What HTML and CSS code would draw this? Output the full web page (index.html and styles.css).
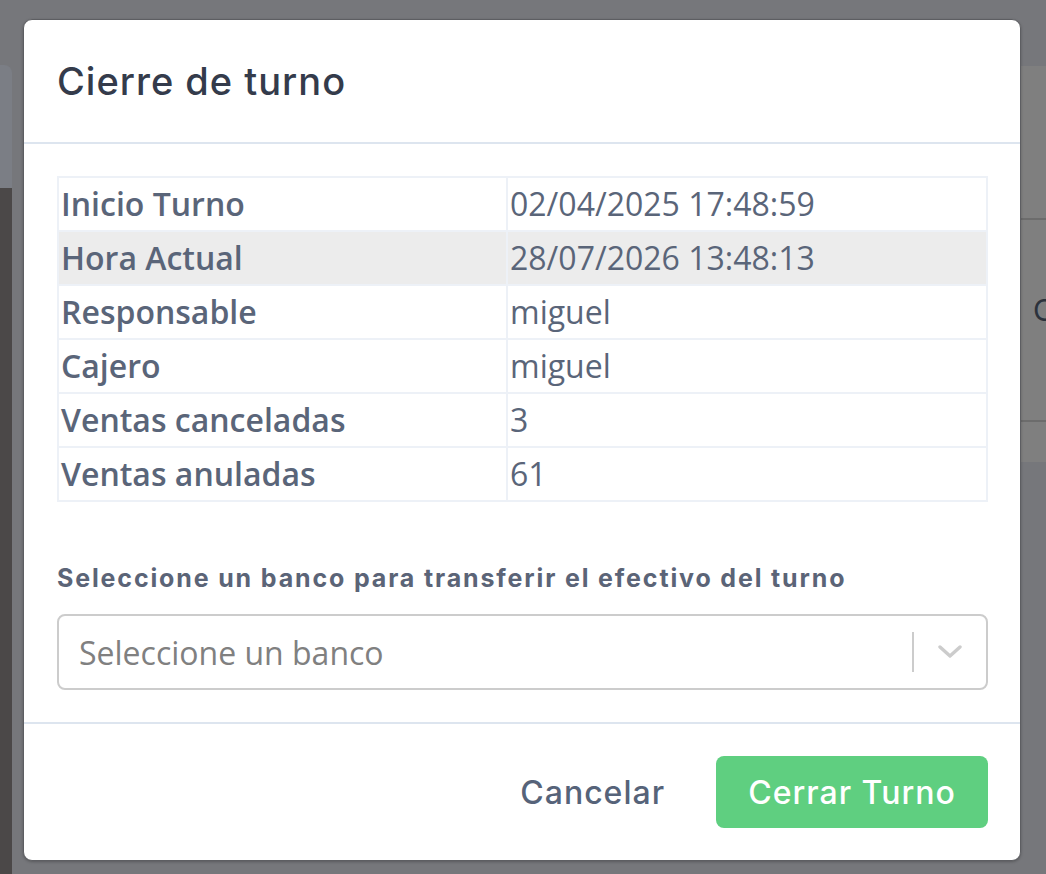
FILE: index.html
```html
<!DOCTYPE html>
<html lang="es">
<head>
<meta charset="utf-8">
<title>Cierre de turno</title>
<link rel="stylesheet" href="styles.css">
</head>
<body>
<div class="page">
  <aside class="sidebar">
    <div class="sidebar-top"></div>
    <div class="sidebar-body"></div>
  </aside>
  <main class="main">
    <section class="bg-card">
      <div class="bg-card-head"></div>
      <div class="bg-row"><span>C</span></div>
    </section>
  </main>
</div>

<div class="overlay">
  <div class="modal">
    <header class="modal-header">
      <h2 class="modal-title">Cierre de turno</h2>
    </header>
    <div class="modal-body">
      <table class="info-table">
        <tbody>
          <tr><th>Inicio Turno</th><td>02/04/2025 17:48:59</td></tr>
          <tr class="hl"><th>Hora Actual</th><td>28/07/2026 13:48:13</td></tr>
          <tr><th>Responsable</th><td>miguel</td></tr>
          <tr><th>Cajero</th><td>miguel</td></tr>
          <tr><th>Ventas canceladas</th><td>3</td></tr>
          <tr><th>Ventas anuladas</th><td>61</td></tr>
        </tbody>
      </table>
      <label class="field-label">Seleccione un banco para transferir el efectivo del turno</label>
      <div class="select">
        <span class="placeholder">Seleccione un banco</span>
        <span class="select-sep"></span>
        <span class="select-arrow">
          <svg width="24" height="14" viewBox="0 0 24 14"><path d="M2 2 L12 11 L22 2" fill="none" stroke="#cccccc" stroke-width="3.4" stroke-linecap="round" stroke-linejoin="round"/></svg>
        </span>
      </div>
    </div>
    <footer class="modal-footer">
      <button class="btn btn-link">Cancelar</button>
      <button class="btn btn-success">Cerrar Turno</button>
    </footer>
  </div>
</div>
</body>
</html>
```

FILE: styles.css
```css
* { box-sizing: border-box; }
html, body { margin: 0; padding: 0; }
body {
  width: 1046px;
  height: 874px;
  overflow: hidden;
  background: #76777b;
  position: relative;
  font-family: "Open Sans", "Noto Sans", sans-serif;
}

/* background page (already dimmed) */
.page {
  display: flex;
  height: 874px;
}
.sidebar {
  width: 12px;
  margin-top: 65px;
  display: flex;
  flex-direction: column;
}
.sidebar-top {
  height: 123px;
  background: #7b7e85;
  border-top-right-radius: 8px;
}
.sidebar-body {
  flex: 1;
  background: #4b4848;
}
.main {
  flex: 1;
  padding-top: 66px;
  padding-left: 700px;
}
.bg-card {
  height: 396px;
  background: #7f7f7f;
}
.bg-card-head {
  height: 152px;
}
.bg-row {
  height: 204px;
  border-top: 2px solid #6c6c6c;
  border-bottom: 2px solid #6c6c6c;
  display: flex;
  align-items: center;
  justify-content: flex-end;
  padding-bottom: 20px;
  overflow: hidden;
}
.bg-row span {
  font-family: "Inter", sans-serif;
  font-size: 30px;
  color: #2c323c;
  margin-right: -9px;
}

/* modal */
.overlay {
  position: absolute;
  inset: 0;
  padding: 19px 25px 13px 23px;
}
.modal {
  width: 998px;
  height: 842px;
  background: #ffffff;
  border: 1px solid #5d5e62;
  border-radius: 9px;
  box-shadow: 0 1px 3px rgba(0,0,0,0.25);
  display: flex;
  flex-direction: column;
  overflow: hidden;
}
.modal-header {
  height: 124px;
  border-bottom: 2px solid #dde5ef;
  display: flex;
  align-items: center;
  padding: 0 33px;
  flex-shrink: 0;
}
.modal-title {
  margin: 0;
  font-family: "Inter", "Lato", sans-serif;
  font-weight: 500;
  font-size: 38px;
  color: #343b4b;
  letter-spacing: 1px;
}
.modal-body {
  padding: 32px 32px 32px 33px;
  border-bottom: 2px solid #dde5ef;
}
.info-table {
  width: 931px;
  border-collapse: collapse;
  border: 2px solid #edf1f7;
}
.info-table th,
.info-table td {
  height: 54px;
  padding: 0 2px;
  text-align: left;
  font-size: 32px;
  color: #5a6579;
  border: 2px solid #edf1f7;
  line-height: 1;
}
.info-table th {
  width: 449px;
  font-weight: 600;
}
.info-table td {
  font-weight: 400;
}
.info-table tr.hl th,
.info-table tr.hl td {
  background: #ececec;
}
.field-label {
  display: block;
  margin-top: 58px;
  font-family: "Inter", "Lato", sans-serif;
  font-weight: 700;
  font-size: 25px;
  letter-spacing: 1.85px;
  line-height: 36px;
  color: #5b6477;
}
.select {
  margin-top: 18px;
  height: 76px;
  border: 2px solid #cccccc;
  border-radius: 8px;
  display: flex;
  align-items: center;
  padding-left: 20px;
}
.placeholder {
  flex: 1;
  font-size: 32px;
  color: #808080;
}
.select-sep {
  width: 2px;
  height: 40px;
  background: #cccccc;
}
.select-arrow {
  width: 72px;
  display: flex;
  justify-content: center;
  align-items: center;
}
.select-arrow svg { display: block; }

.modal-footer {
  flex: 1;
  display: flex;
  justify-content: flex-end;
  align-items: flex-start;
  padding: 32px 32px 0 0;
  gap: 26px;
}
.btn {
  font-family: "Inter", "Lato", sans-serif;
  font-weight: 500;
  font-size: 32px;
  letter-spacing: 1px;
  height: 72px;
  border: none;
  border-radius: 8px;
  background: transparent;
  cursor: pointer;
  padding: 0 25px;
}
.btn-link {
  color: #566379;
}
.btn-success {
  width: 272px;
  background: #5fcf80;
  color: #ffffff;
  padding: 0;
}
```
